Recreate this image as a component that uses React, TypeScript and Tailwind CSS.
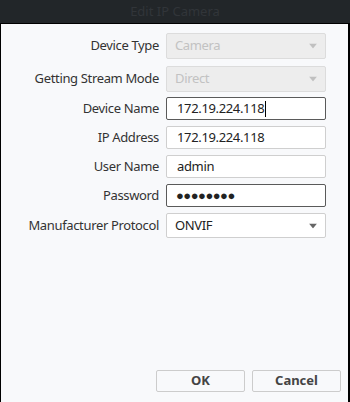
import { ReactNode } from "react"

const font = { fontFamily: '"Noto Sans", "Liberation Sans", sans-serif' }

const Arrow = ({ color }: { color: string }) => (
    <svg width="8" height="5" viewBox="0 0 8 5" className="absolute right-[8px] top-1/2 -translate-y-1/2">
        <path d="M0 0 L8 0 L4 5 Z" fill={color} />
    </svg>
)

const Row = ({ label, children, mt }: { label: string; children: ReactNode; mt: string }) => (
    <div className={`flex items-center ${mt}`}>
        <div className="w-[158px] text-right text-[13px] text-[#333] tracking-[-0.35px]">{label}</div>
        <div className="ml-[7px] w-[160px]">{children}</div>
    </div>
)

export default function App() {
    return (
        <div className="w-[350px] h-[402px] flex flex-col bg-[#222629]" style={font}>
            <div className="h-[23px] shrink-0 flex items-center justify-center text-[13px] text-[#313539]">
                Edit IP Camera
            </div>

            <div className="flex-1 flex flex-col bg-[#f8f9fb] border-t border-l border-r-2 border-black">
                <div className="pt-[9px]">
                    <Row label="Device Type" mt="mt-0">
                        <div className="relative h-[26px] rounded-[2px] border border-[#dcdcdc] bg-[#ededed] pl-[8px] flex items-center text-[13px] text-[#c2c2c2] tracking-[-0.35px]">
                            Camera
                            <Arrow color="#c0c0c0" />
                        </div>
                    </Row>
                    <Row label="Getting Stream Mode" mt="mt-[7px]">
                        <div className="relative h-[26px] rounded-[2px] border border-[#dcdcdc] bg-[#ededed] pl-[8px] flex items-center text-[13px] text-[#c2c2c2] tracking-[-0.35px]">
                            Direct
                            <Arrow color="#c0c0c0" />
                        </div>
                    </Row>
                    <Row label="Device Name" mt="mt-[5px]">
                        <div className="h-[23px] rounded-[2px] border border-[#5a5a5a] bg-white pl-[10px] flex items-center text-[13px] text-[#222] tracking-[-0.35px]">
                            172.19.224.118
                            <span className="ml-[1px] w-px h-[16px] bg-black" />
                        </div>
                    </Row>
                    <Row label="IP Address" mt="mt-[6px]">
                        <div className="h-[23px] rounded-[2px] border border-[#cfcfcf] bg-white pl-[10px] flex items-center text-[13px] text-[#222] tracking-[-0.35px]">
                            172.19.224.118
                        </div>
                    </Row>
                    <Row label="User Name" mt="mt-[6px]">
                        <div className="h-[23px] rounded-[2px] border border-[#cfcfcf] bg-white pl-[10px] flex items-center text-[13px] text-[#222] tracking-[-0.35px]">
                            admin
                        </div>
                    </Row>
                    <Row label="Password" mt="mt-[6px]">
                        <div className="h-[23px] rounded-[2px] border border-[#5a5a5a] bg-white pl-[9px] flex items-center text-[13px] text-[#222] tracking-[-0.5px]">
                            ●●●●●●●●
                        </div>
                    </Row>
                    <Row label="Manufacturer Protocol" mt="mt-[6px]">
                        <div className="relative h-[25px] rounded-[2px] border border-[#cfcfcf] bg-white pl-[8px] flex items-center text-[13px] text-[#222] tracking-[-0.35px]">
                            ONVIF
                            <Arrow color="#666" />
                        </div>
                    </Row>
                </div>

                <div className="flex-1" />

                <div className="flex justify-end gap-[7px] pr-[7px] pb-[10px]">
                    <button className="w-[89px] h-[22px] rounded-[2px] border border-[#cccccc] bg-[#f8f9fb] text-[13px] font-bold text-[#444]">OK</button>
                    <button className="w-[89px] h-[22px] rounded-[2px] border border-[#cccccc] bg-[#f8f9fb] text-[13px] font-bold text-[#444]">Cancel</button>
                </div>
            </div>
        </div>
    )
}
